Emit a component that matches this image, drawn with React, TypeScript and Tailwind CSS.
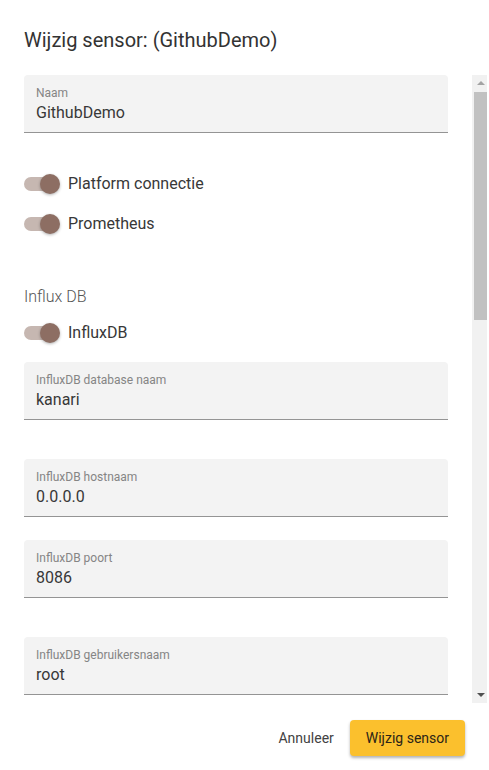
function Field({ label, value, className = '' }: { label: string; value: string; className?: string }) {
  return (
    <div className={`flex h-[58px] shrink-0 flex-col rounded-t-[4px] border-b border-[#949494] bg-[#f3f3f3] px-3 pt-[10px] ${className}`}>
      <span className="text-[12px] leading-4 text-[#858585]">{label}</span>
      <span className="mt-[2px] text-[16px] leading-5 text-[#383838]">{value}</span>
    </div>
  );
}

function Toggle({ label, className = '' }: { label: string; className?: string }) {
  return (
    <div className={`flex h-10 shrink-0 items-center ${className}`}>
      <div className="relative h-5 w-9 shrink-0">
        <div className="absolute left-0 top-[3px] h-[14px] w-[34px] rounded-full bg-[#c6b7b1]" />
        <div className="absolute left-4 top-0 h-5 w-5 rounded-full bg-[#8d6e63] shadow-[0_1px_3px_rgba(0,0,0,0.3)]" />
      </div>
      <span className="ml-2 text-[16px] text-[#383838]">{label}</span>
    </div>
  );
}

function Scrollbar() {
  return (
    <div className="flex w-[15px] shrink-0 flex-col bg-[#f1f1f1]">
      <div className="flex h-[15px] shrink-0 items-center justify-center pl-[2px]">
        <svg width="8" height="5" viewBox="0 0 8 5">
          <path d="M0 5 L4 1 L8 5 Z" fill="#a3a3a3" />
        </svg>
      </div>
      <div className="ml-[2px] mt-[2px] h-[228px] bg-[#c1c1c1]" />
      <div className="flex-1" />
      <div className="flex h-[15px] shrink-0 items-center justify-center pl-[2px]">
        <svg width="8" height="5" viewBox="0 0 8 5">
          <path d="M0 0 L8 0 L4 4 Z" fill="#505050" />
        </svg>
      </div>
    </div>
  );
}

export default function App() {
  return (
    <div className="flex h-[770px] w-[489px] flex-col bg-white font-['Roboto',sans-serif]">
      <h2 className="px-6 pb-[19px] pt-6 text-[20px] leading-8 text-[#333]">Wijzig sensor: (GithubDemo)</h2>

      <div className="mr-[2px] flex h-[628px] shrink-0">
        <div className="flex flex-1 flex-col overflow-hidden px-6">
          <Field label="Naam" value="GithubDemo" />
          <Toggle label="Platform connectie" className="mt-[31px]" />
          <Toggle label="Prometheus" />
          <div className="mt-[41px] flex h-6 shrink-0 items-center text-[16px] font-light text-[#555]">Influx DB</div>
          <Toggle label="InfluxDB" className="mt-1" />
          <Field label="InfluxDB database naam" value="kanari" className="mt-[9px]" />
          <Field label="InfluxDB hostnaam" value="0.0.0.0" className="mt-[39px]" />
          <Field label="InfluxDB poort" value="8086" className="mt-[23px]" />
          <Field label="InfluxDB gebruikersnaam" value="root" className="mt-[39px]" />
        </div>
        <Scrollbar />
      </div>

      <div className="flex items-start justify-end gap-2 pr-6 pt-[17px]">
        <button className="h-9 rounded px-2 text-[14px] text-[#424242]">Annuleer</button>
        <button className="h-9 rounded bg-[#fbc02d] px-4 text-[14px] text-[#2b2417] shadow-[0_2px_3px_rgba(0,0,0,0.3)]">
          Wijzig sensor
        </button>
      </div>
    </div>
  );
}
